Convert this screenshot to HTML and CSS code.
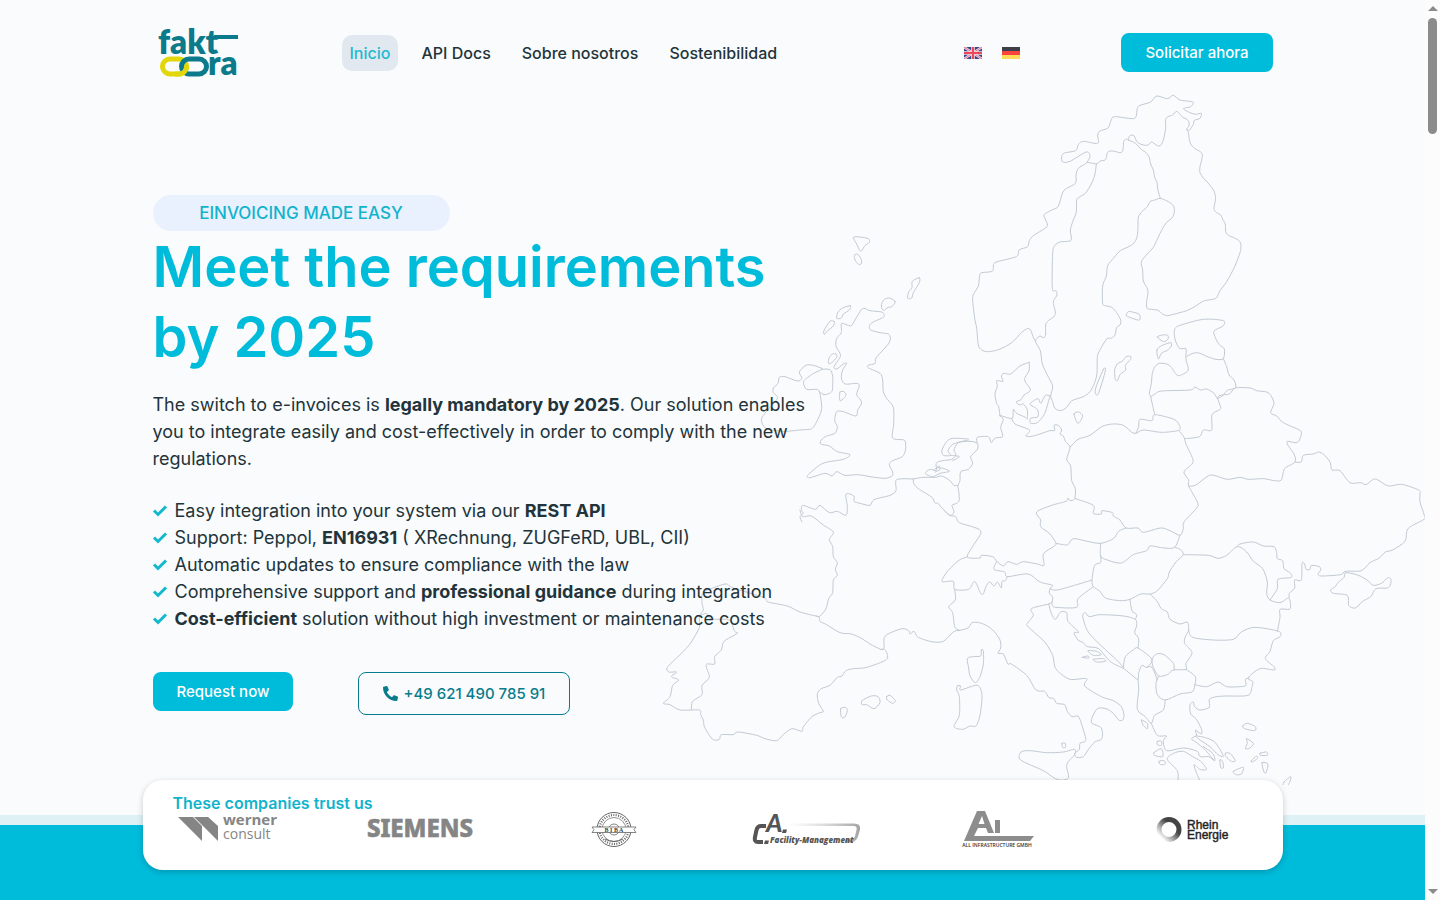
FILE: index.html
```html
<!DOCTYPE html>
<html lang="es">
<head>
<meta charset="utf-8">
<meta name="viewport" content="width=device-width, initial-scale=1">
<title>faktoora – E-Invoicing</title>
<link rel="stylesheet" href="styles.css">
<script src="map.js" defer></script>
</head>
<body>
<div class="page">
  <section class="hero">
    <svg class="map" viewBox="650 90 775 695" aria-hidden="true">
      <!-- Scandinavia, Finland, Baltics -->
      <g transform="translate(940 90) scale(.33333)">
        <path d="M469 222 442 217 M469 222 475 218 483 212 494 211 499 203 502 188 510 183 525 184 538 188 547 185 550 170 551 155 558 147 566 151 580 156 592 165 604 178 620 190 628 203 632 222 640 240 644 262 651 277 653 295 657 312 661 325 M566 151 567 140 574 135 583 138 587 148 594 158 606 164 620 166 628 162 634 156 642 160 652 167 662 166 670 150 674 132 677 115 677 88 684 80 698 75 709 64 718 70 728 82 740 87 747 97 747 108 740 117 745 128 748 148 752 162 765 176 781 185 787 195 784 215 780 230 780 248 791 265 807 282 822 303 827 325 824 342 822 358 830 368 842 375 850 392 856 402 857 425 865 436 882 443 898 453 903 466 900 488 884 530 860 575 840 602 829 624 812 629 791 633 764 650 740 662 700 673 680 677 665 670 655 661 635 658 621 655 620 632 624 610 621 593 610 573 608 540 604 515 622 492 640 472 653 445 668 415 680 397 697 383 703 365 700 347 685 335 661 325 645 330 630 335 622 350 606 365 595 381 594 410 592 437 585 455 570 468 541 482 522 503 503 527 499 558 488 588 488 640 496 647 515 652 530 668 542 690 540 705 530 712 525 735 515 744 500 747 480 780 472 800 471 850 463 880 450 905 430 920 396 932 380 952 362 962 345 955 338 935 332 918 338 888 322 855 307 822 301 782 287 757 288 748 300 738 312 744 317 732 317 705 325 692 342 680 346 666 340 640 343 628 351 615 348 602 337 595 338 490 345 466 360 456 393 451 391 420 400 390 409 365 410 330 420 320 437 309 456 278 465 252 469 222"/>
        <path d="M740 117 748 121 760 103 763 91 780 85 784 70 768 73 750 68 730 56 752 50 758 36 720 30 700 16 682 26 650 18 632 36 600 46 592 55 588 80 576 86 523 80 513 92 504 114 480 123 473 135 473 160 430 154 415 164 407 182 373 189 365 200 368 216 390 214 436 187 448 190 449 203 438 220 415 235 408 255 406 280 372 301 360 334 353 352 340 358 317 370 312 378 322 402 318 413 280 437 268 452 263 470 237 480 229 500 165 518 158 543 126 548 119 556 115 588 101 612 98 630 104 684 110 714 115 765 125 780 145 785 178 778 215 758 245 727 262 716 272 720 279 740 287 754"/>
        <path d="M559 677 565 665 577 666 598 673 599 690 580 686ZM652 741 667 735 683 736 684 747 671 755ZM651 780 665 767 692 758 694 768 682 781 665 789 655 807ZM571 799 572 808 556 826 557 840 540 854 533 871 526 868 524 840 532 822 549 812 558 800ZM491 837 496 843 475 911 466 909 469 888Z"/>
        <path d="M737 800 738 776 720 776 708 757 703 735 705 716 720 706 790 688 850 692 849 708 822 723 827 745 838 764 853 777 850 806 828 808 805 801 770 788 738 803 745 840 718 857 706 850 694 832 680 822 658 820 645 830 637 850 634 880 628 910 633 920M850 806 860 830 867 855 882 870 887 893 862 901 850 915 833 925 822 910 800 897 782 900 764 891 750 900 665 903 645 912 633 920"/>
        <path d="M268 817 267 843 255 862 256 876 270 895 268 905 252 915 243 929 228 936 240 945 250 942 262 960 262 984M268 817 240 828 212 852 192 850 184 858 189 874 170 872 172 888 165 912 170 940 176 950 180 976"/>
      </g>
      <!-- British Isles, Faroe, Low Countries -->
      <g transform="translate(750 220) scale(.33333)">
        <path d="M310 52 330 51 355 56 358 67 345 77 332 94 320 72ZM315 104 325 104 335 122 331 134 320 128 313 113ZM508 173 508 188 490 218 485 234 473 235 476 216 486 203 487 184ZM436 245 418 234 401 240 394 258 401 271 414 262 425 260ZM301 257 298 270 280 282 274 294 260 295 264 276 278 264ZM253 305 250 318 233 332 223 343 222 332 240 304ZM258 402 260 412 245 428 235 430 238 412 248 402ZM270 516 282 515 288 525 282 534 270 542Z"/>
        <path d="M343 265 360 272 395 276 402 284 400 292 366 308 358 320 362 330 390 338 415 342 421 354 415 372 378 414 376 430 354 436 356 444 390 460 398 480 400 516 412 538 430 562 431 612 428 654 462 660 467 672 466 692 457 710 428 722 418 734 428 756 426 768 405 775 360 770 325 764 285 766 260 755 246 768 225 760 180 773 173 766 208 736 232 726 280 718 300 704 262 695 238 678 212 672 214 660 230 648 255 640 262 620 254 602 260 575 280 575 318 588 323 570 334 552 332 540 320 524 328 496 318 490 285 492 274 474 278 450 290 430 280 432 260 447 252 440 270 412 270 400 258 378 260 355 274 338 275 310 302 318 315 300 333 270Z"/>
        <path d="M215 445 190 436 168 436 148 456 156 475 142 483 105 470 88 472 84 490 70 504 70 518 82 535 45 580 34 600 48 625 100 634 150 630 178 628 190 622 205 595 215 565 210 522 202 508 170 508 161 484 188 462 212 450 215 445ZM215 448 240 449 248 470 247 510 238 520 222 524 210 516"/>
        <path d="M490 777 440 779 438 812 420 826 372 839 360 856 330 850 312 844 312 828 288 822 292 860 288 886 262 874 238 878 210 856 196 868 158 856 155 872 160 880 150 890 156 906M490 777 520 772 556 772 575 768 600 782 612 797 623 798 628 838 620 850 606 856 612 876 600 886 574 862 564 850 554 848 546 832 508 808 492 792 490 777M623 798 630 782 632 755 655 748 668 730 662 710 682 688 682 670 660 664 625 668 612 690 618 705 605 718 578 722 560 728 560 742 580 745 598 754 570 760 548 770 526 760 540 748 558 752 560 742M655 657 608 655 590 665 576 690 580 706 602 706 594 692 610 672 655 660M602 706 628 710 608 722M552 750 566 738 570 748 556 756M682 670 682 652 715 650 724 668 735 654 758 650 752 622 760 598 748 587"/>
      </g>
      <!-- Central Europe -->
      <g transform="translate(920 380) scale(.33333)">
        <path d="M240 106 276 115 280 88 290 100 316 112 322 118M276 115 285 132 328 150 318 168 340 168 390 152 404 152 402 136 415 136 425 150 420 162 430 168 436 184 450 202 440 238 452 258 455 302 466 326 464 356 450 362 444 354 438 364 395 376 350 396 362 420 362 440 390 462 408 490 400 500 370 522 372 556 352 552 310 545 290 553 264 545 250 558 230 544 218 530 184 526 180 534 142 531 160 496 182 452 118 428 108 410 88 406 72 390"/>
        <path d="M390 48 378 90 370 108 352 128 332 130 332 115 354 110 352 88 330 72 354 56 362 70 376 46 390 48M462 102 476 96 488 108 474 130Z"/>
        <path d="M450 202 474 178 510 166 545 140 578 132 610 136 642 160 670 150 725 157 776 151 778 136 762 118 704 104 696 122 660 118 656 140 648 160M704 104 692 50M776 151 792 172 798 192 818 236 816 252 792 276 806 300 806 318 832 366 830 384 792 426 790 446 780 466 750 452 722 444 670 457 654 444 618 444 600 420 580 408 578 398 546 392 544 402 520 400 520 376 466 356M618 444 596 454 580 476 542 490 502 484 460 476 444 494 430 494 408 490M780 466 764 502 732 504 690 498 680 512 640 524 604 549 562 540 542 528 542 490M764 502 780 508 790 524 768 546 748 576 742 596 712 632 690 642 662 642 630 658 600 662 556 654 540 634 520 620 516 600 524 556 542 548 542 528M516 600 470 614 412 630 390 626 398 616 360 606 324 582 262 590 254 576 222 568 230 544M262 590 256 602 246 604 244 624 232 606 222 618 210 606 202 612 194 630 190 642 182 640 164 604 146 628 104 628 100 604 66 604 84 572 118 540 142 531M390 626 388 640 398 652 396 674 408 682 470 682 474 656 520 620M104 628 106 660 86 680 98 698 104 740 116 750"/>
      </g>
      <!-- Belarus, Ukraine, Romania, Moldova -->
      <g transform="translate(1140 380) scale(.33333)">
        <path d="M232 54 242 82 238 90 216 104 215 150 190 150 178 170 134 176M232 54 240 46 268 42 286 24 330 24 350 32 380 36 392 46 402 70 392 98 410 108 430 128 478 150 484 162 476 184 465 188 442 184 444 196 462 222 465 246 434 266 424 300 404 302 370 296 325 298 300 292 262 298 222 286 204 288 166 316 146 318M465 246 484 246 490 226 520 222 536 216 552 224 570 246 576 270 600 272 630 308 662 308 678 314 700 298 714 300 745 318 785 313 836 330 840 342 840 366 853 406 852 418 804 446 795 484 758 510 736 516 718 534 690 548 664 572 616 574 602 584 544 588 534 582 542 570 538 560 514 556 510 568 498 568 494 552 486 550 484 600 464 600 464 624 448 640 448 654 M616 578 612 592 592 610 586 620 572 630 580 640 622 646 626 676 646 684 668 664 692 650 708 626 742 624 752 612 752 596 742 594 724 610 700 616 684 602 660 588 642 582Z"/>
        <path d="M131 524 205 526 234 535 260 526 292 500 320 516 340 544 368 566 382 606 380 640 390 660 420 668 440 656 448 656 452 674 448 688 420 688 420 712 412 754M292 500 300 492 340 486 370 498 402 500 410 518 412 536 428 542 432 566 450 578 454 592 414 598 412 626 390 660"/>
      </g>
      <!-- France and Iberia -->
      <g transform="translate(650 560) scale(.33333)">
        <path d="M450 -150 458 -130 484 -132 520 -105 550 -84 538 -62 548 -40 550 -10 562 8 556 28 562 46 550 60 548 98 536 116 528 146 510 168 498 168 450 156 412 138 354 126 340 112 250 84 230 72 205 78 160 98 156 128 160 150 148 168 148 202 124 246 106 268 84 290 52 322 56 336 80 336 64 350 86 360 68 376 60 410 40 430 60 434 90 450 148 450 152 464 160 480 164 502 188 538 208 538 214 524 250 524 264 516 320 526 345 536 380 542 400 524 426 506 456 514 460 500 486 470 510 458 520 454 506 430 502 402 514 386 540 376 562 352 576 348 588 332 610 326 650 322 710 298 706 270 692 268 660 252 636 236 604 222 570 218 530 194 510 184 508 172 498 168M692 268 702 264 702 236 714 222 756 206 776 212 780 222 792 214 802 230 820 238 850 246 880 244 910 216 926 210M148 168 170 160 180 176 200 178 238 180 254 214 262 220 222 244 214 270 194 290 194 312 168 314 178 352 156 376 156 404 128 424 124 448"/>
        <path d="M572 446 586 442 592 452 584 472 574 470ZM636 422 664 408 684 410 690 428 672 446 650 434 636 434ZM710 410 720 406 736 422 728 430 712 420Z"/>
      </g>
      <!-- Italy and the Balkans -->
      <g transform="translate(940 580) scale(.33333)">
        <path d="M55 152 84 144 96 128 118 128 142 138 162 154 180 180 182 204 174 220 190 222 204 252 214 252 260 286 288 330 314 334 326 352 342 356 350 370 374 374 382 394 396 410 414 408 424 430 436 470 436 484 420 490 418 508 404 520 410 532 430 530 444 510 464 486 486 476 484 444 456 430 456 414 472 386 498 386 520 400 536 420 548 420 552 406 544 380 520 362 484 350 434 318 440 296 390 298 356 276 344 258 338 226 316 188 284 158 262 138 262 130 280 106 274 86 326 72 336 66 M326 72 334 100 346 118 362 96 380 98 384 124 416 156 402 158 414 180 430 188 442 200 476 206 510 244 550 264 530 240 506 218 460 174 440 148 428 108 436 98 448 110 480 104 550 108 586 118 590 136 584 158 596 176 594 204 M550 264 556 230 580 210 594 204 636 238 620 262 606 256 596 278 594 298 574 284 550 264"/>
        <path d="M243 516 270 512 320 518 370 516 404 508 404 524 384 546 380 562 386 592 370 600 346 596 310 572 242 540ZM366 490 376 490 376 502 368 502ZM124 210 130 212 130 252 120 290 106 308 90 288 86 264 82 236 98 230 122 228ZM52 318 62 318 62 330 112 316 126 346 120 406 108 438 90 438 68 448 42 440 58 406 58 350 50 330ZM444 212 470 214 484 224 460 226ZM426 232 444 228 446 234ZM460 238 490 236 496 244 470 246Z"/>
        <path d="M570 58 576 92 590 104 586 118M630 42 650 62 664 86 682 96 690 118 720 132 742 126 746 150 736 170 734 190 756 218 738 250 738 268 700 270 682 284 656 288 640 262 636 238 650 222 672 224 700 250 702 270M738 268 766 290 764 318 756 336 720 342 676 360 652 344 648 310 656 288M620 262 636 262 652 300M594 298 596 330 592 388 616 410 634 430 644 406 670 390 676 360M746 150 758 172 820 180 880 178 904 156 944 142 1016 154 1020 170 1000 182 990 214 976 236 1002 260 1002 270 960 266 924 294 938 304 936 320 924 346 860 348 830 350 808 358 808 382 780 390 764 380 760 366 750 374 752 402 768 416 784 446 784 462 766 450 770 466 754 476 770 488 794 508 824 542 818 520 790 500 M764 314 800 320 834 306 860 320 900 320 918 316 916 298 928 294M634 430 652 466 680 468 670 482 680 512 730 504 772 514 780 530 806 530 822 542M768 468 800 474 826 488 850 528 834 524 810 500 780 480ZM714 602 712 572 682 538 700 520 730 514 758 530 782 544 800 568 780 568 762 554 770 580 780 602"/>
        <path d="M604 420 622 430 622 446 610 436ZM652 484 664 484 664 496 652 494ZM642 518 664 506 668 530 644 526ZM656 544 672 542 676 552 662 554ZM856 520 870 520 886 542 874 544 858 530ZM840 540 848 544 850 564 842 562ZM908 438 922 430 946 440 944 452 914 446ZM920 476 940 490 930 504 916 506 922 490ZM960 520 980 516 982 526 962 526ZM934 542 950 528 952 536 936 546ZM966 548 984 552 978 578 972 576ZM880 574 910 562 904 582 888 584ZM1032 606 1052 590 1050 604 1036 630 1028 622Z"/>
      </g>
    </svg>

    <header class="container topbar">
      <a class="brand" href="#" aria-label="faktoora">
        <svg class="brand-logo" viewBox="0 0 84 52" aria-hidden="true">
          <g class="brand-word"><text x="1" y="27">fakt</text><text x="51" y="48">ra</text></g>
          <path d="M57 10H81" stroke="#0b7a8a" stroke-width="4" fill="none"/>
          <g fill="none" stroke-width="5">
            <rect x="5.500" y="32" width="24" height="15" rx="7.500" stroke="#e2d70b"/>
            <rect x="24.500" y="32" width="25" height="15" rx="7.500" stroke="#0b7a8a"/>
            <path d="M29.500 39a7.500 7.500 0 0 1-7.500 8h-4" stroke="#e2d70b"/>
          </g>
        </svg>
      </a>
      <nav class="menu" aria-label="Principal">
        <a class="menu-link is-active" href="#">Inicio</a>
        <a class="menu-link" href="#">API Docs</a>
        <a class="menu-link" href="#">Sobre nosotros</a>
        <a class="menu-link" href="#">Sostenibilidad</a>
      </nav>
      <div class="languages">
        <a class="language" href="#" aria-label="English">
          <svg class="flag" viewBox="0 0 18 12"><path fill="#35478c" d="M0 0h18v12H0z"/><path d="M0 0l18 12M18 0L0 12" stroke="#e9dbe6" stroke-width="2.400"/><path d="M0 0l18 12M18 0L0 12" stroke="#f0566a" stroke-width=".8"/><path d="M9 0v12M0 6h18" stroke="#f3dbe2" stroke-width="3.600"/><path d="M9 0v12M0 6h18" stroke="#f0465a" stroke-width="2"/></svg>
        </a>
        <a class="language" href="#" aria-label="Deutsch">
          <svg class="flag" viewBox="0 0 18 12"><path fill="#3f3f4a" d="M0 0h18v4H0z"/><path fill="#f9443b" d="M0 4h18v4H0z"/><path fill="#ffda58" d="M0 8h18v4H0z"/></svg>
        </a>
      </div>
      <a class="button button-solid" href="#">Solicitar ahora</a>
    </header>

    <main class="container intro">
      <p class="badge">EINVOICING MADE EASY</p>
      <h1 class="title">Meet the requirements<br>by 2025</h1>
      <p class="lead">The switch to e-invoices is <strong>legally mandatory by 2025</strong>. Our solution enables you to integrate easily and cost-effectively in order to comply with the new regulations.</p>
      <ul class="benefits">
        <li class="benefit"><svg class="check" viewBox="0 0 14 12"><path d="M1 5.500L5 9.500 13 1.500"/></svg><span>Easy integration into your system via our <strong>REST API</strong></span></li>
        <li class="benefit"><svg class="check" viewBox="0 0 14 12"><path d="M1 5.500L5 9.500 13 1.500"/></svg><span>Support: Peppol, <strong>EN16931</strong> ( XRechnung, ZUGFeRD, UBL, CII)</span></li>
        <li class="benefit"><svg class="check" viewBox="0 0 14 12"><path d="M1 5.500L5 9.500 13 1.500"/></svg><span>Automatic updates to ensure compliance with the law</span></li>
        <li class="benefit"><svg class="check" viewBox="0 0 14 12"><path d="M1 5.500L5 9.500 13 1.500"/></svg><span>Comprehensive support and <strong>professional guidance</strong> during integration</span></li>
        <li class="benefit"><svg class="check" viewBox="0 0 14 12"><path d="M1 5.500L5 9.500 13 1.500"/></svg><span><strong>Cost-efficient</strong> solution without high investment or maintenance costs</span></li>
      </ul>
      <div class="actions">
        <a class="button button-solid" href="#">Request now</a>
        <a class="button button-outline" href="tel:+4962149078591">
          <svg class="phone" viewBox="0 0 512 512" aria-hidden="true"><path d="M493.400 24.600l-104-24c-11.300-2.600-22.900 3.300-27.500 13.900l-48 112c-4.200 9.800-1.400 21.300 6.900 28l60.600 49.600c-36 76.700-98.900 140.500-177.200 177.200l-49.600-60.600c-6.800-8.300-18.200-11.100-28-6.900l-112 48C3.900 366.500-2 378.100.6 389.400l24 104C27.100 504.200 36.700 512 48 512c256.100 0 464-207.500 464-464 0-11.200-7.700-20.900-18.600-23.400z" transform="matrix(-1 0 0 1 512 0)"/></svg>
          +49 621 490 785 91
        </a>
      </div>
    </main>
  </section>

  <section class="trust">
    <div class="trust-card">
      <h2 class="trust-title">These companies trust us</h2>
      <div class="logos">
        <svg class="logo" viewBox="0 0 108 36" role="img" aria-label="werner consult">
          <path fill="#858585" d="M5 6h15l9 9v15zM21 6h14l10 9v15z"/>
          <g fill="#858585" font-family="Open Sans, sans-serif" font-size="15"><text x="50" y="14" font-weight="700">werner</text><text x="50" y="28" font-size="14">consult</text></g>
        </svg>
        <svg class="logo" viewBox="0 0 108 36" role="img" aria-label="SIEMENS"><text x="54" y="26" text-anchor="middle" fill="#858585" stroke="#858585" stroke-width=".6" font-family="Noto Sans, sans-serif" font-size="24" font-weight="800">SIEMENS</text></svg>
        <svg class="logo" viewBox="0 0 108 36" role="img" aria-label="BIBA">
          <g fill="none" stroke="#666"><circle cx="55" cy="18.500" r="17" stroke-width="1"/><circle cx="55" cy="18.500" r="12" stroke-width=".7"/><circle cx="55" cy="18.500" r="14.500" stroke-width="2.200" stroke-dasharray="1 1.400"/><circle cx="55" cy="18.500" r="5.500" stroke-width=".8"/><path d="M46 28q9 5 18 0" stroke-width="1"/></g>
          <path d="M33 16h44l-2 2.700 2 2.800H33l2-2.800z" fill="#fff" stroke="#666" stroke-width=".8"/>
          <text x="55" y="20.800" text-anchor="middle" fill="#444" font-family="Liberation Serif, serif" font-size="6" font-weight="700">B I B A</text>
        </svg>
        <svg class="logo" viewBox="0 0 108 36" role="img" aria-label="C.A. Facility-Management">
          <defs><linearGradient id="fade"><stop offset="0" stop-color="#ccc" stop-opacity="0"/><stop offset="1" stop-color="#a4a4a4"/></linearGradient></defs>
          <path d="M36 12.500h66q7 0 6 6l-2 7q-2 6-9 6h-4v-2.500h4q5 0 6-4l1.500-6q1-4-3-4H36z" fill="url(#fade)"/>
          <path d="M14 15H9Q5.500 15 4.500 19L3 26Q2 31 6 31h5" fill="none" stroke="#555" stroke-width="4"/>
          <path d="M13 29.500h4l-1 3.500h-4zM31 18.500h4l-1 3.500h-4z" fill="#555"/>
          <text x="14" y="21" fill="#555" font-family="Lato, sans-serif" font-size="25" font-weight="900" font-style="italic">A</text>
          <text x="18" y="32" fill="#555" font-family="Open Sans, sans-serif" font-size="8" font-weight="800" font-style="italic">Facility-Management</text>
        </svg>
        <svg class="logo" viewBox="0 0 108 36" role="img" aria-label="AI All Infrastructure GmbH">
          <path fill="#8d8d8d" fill-rule="evenodd" d="M32 0h8l9 22h-6l-2-5h-8l-4 8h60l-4 5H19zM37 5l-3.500 8h6zM50 9h5v13h-5z"/>
          <text x="52" y="36" text-anchor="middle" fill="#333" font-family="Open Sans, sans-serif" font-size="5" font-weight="600">ALL INFRASTRUCTURE GMBH</text>
        </svg>
        <svg class="logo" viewBox="0 0 108 36" role="img" aria-label="Rhein Energie">
          <defs><linearGradient id="ring" x1="0" y1="1" x2="1" y2="0"><stop offset=".1" stop-color="#fff"/><stop offset=".65" stop-color="#444"/></linearGradient></defs>
          <circle cx="31" cy="18.500" r="10" fill="none" stroke="url(#ring)" stroke-width="5"/>
          <g fill="#222" stroke="#222" stroke-width=".4" font-family="Liberation Sans, sans-serif" font-size="12"><text x="49" y="18">Rhein</text><text x="49" y="28">Energie</text></g>
        </svg>
      </div>
    </div>
  </section>
</div>
<div class="scrollbar" aria-hidden="true">
  <span class="arrow arrow-up"></span>
  <span class="thumb"></span>
  <span class="arrow arrow-down"></span>
</div>
</body>
</html>
```
FILE: map.js
```js
// Turns the straight border segments of the map into smooth curves.
function smooth(points, closed) {
  const n = points.length;
  const at = i => closed ? points[(i + n) % n] : points[Math.max(0, Math.min(n - 1, i))];
  const k = 7;
  let d = `M${points[0][0]} ${points[0][1]}`;
  const last = closed ? n : n - 1;
  for (let i = 0; i < last; i++) {
    const [a, b, c, e] = [at(i - 1), at(i), at(i + 1), at(i + 2)];
    d += `C${b[0] + (c[0] - a[0]) / k} ${b[1] + (c[1] - a[1]) / k} ` +
         `${c[0] - (e[0] - b[0]) / k} ${c[1] - (e[1] - b[1]) / k} ${c[0]} ${c[1]}`;
  }
  return closed ? d + "Z" : d;
}

document.querySelectorAll(".map path").forEach(path => {
  const lines = path.getAttribute("d").split("M").filter(s => s.trim());
  path.setAttribute("d", lines.map(line => {
    const nums = line.match(/-?\d+/g).map(Number);
    const points = [];
    for (let i = 0; i < nums.length; i += 2) points.push([nums[i], nums[i + 1]]);
    return smooth(points, line.includes("Z"));
  }).join(""));
});
```
FILE: styles.css
```css
* { box-sizing: border-box; }

body {
  margin: 0;
  display: flex;
  height: 100vh;
  overflow: hidden;
  font-family: Inter, "Liberation Sans", sans-serif;
  color: #22343a;
  background: #fff;
}

a { color: inherit; text-decoration: none; }

.page {
  flex: 1;
  min-width: 0;
  display: flex;
  flex-direction: column;
}

.container {
  width: 100%;
  max-width: 1140px;
  margin: 0 auto;
  padding: 0 10px;
}

/* Hero */
.hero {
  position: relative;
  padding-bottom: 100px;
  background: #f9fbfd;
}

.map {
  position: absolute;
  top: 90px;
  right: 0;
  width: 775px;
  height: 695px;
  fill: none;
  stroke: #c1c9d2;
  stroke-width: 3;
  stroke-linejoin: round;
  stroke-linecap: round;
}

.topbar {
  position: relative;
  display: flex;
  align-items: center;
  height: 105px;
}

.brand { flex: 0 0 189px; padding-left: 4px; }
.brand-logo { display: block; width: 84px; height: 52px; overflow: visible; }
.brand-word {
  font-family: Lato, sans-serif;
  font-size: 33px;
  font-weight: 800;
  fill: #0b7a8a;
}

.menu { display: flex; gap: 15px; }
.menu-link {
  padding: 8px;
  border-radius: 10px;
  font-size: 16px;
  line-height: 20px;
  font-weight: 500;
  white-space: nowrap;
}
.menu-link.is-active { background: #e2e8f0; color: #1fb9d0; }

.languages { display: flex; gap: 20px; margin-left: auto; }
.language { display: block; }
.flag { display: block; width: 18px; height: 12px; }
.topbar .button { margin-left: 101px; }

.button {
  display: inline-flex;
  align-items: center;
  gap: 5px;
  border-radius: 8px;
  font-size: 15px;
  line-height: 15px;
  font-weight: 500;
  white-space: nowrap;
}
.button-solid { padding: 12px 24px; background: #00bcdb; color: #fff; }
.button-outline { padding: 13px 24px; border: 1px solid #087c8b; color: #087c8b; }
.phone { width: 15px; height: 15px; fill: currentColor; }

.intro { position: relative; padding-top: 90px; }

.badge {
  width: 297px;
  margin: 0;
  border-radius: 18px;
  background: #eaf1fe;
  color: #12b3cc;
  font-size: 17px;
  line-height: 36px;
  font-weight: 500;
  text-align: center;
}

.title {
  margin: 1px 0 19px;
  color: #00bcdb;
  font-size: 56px;
  line-height: 70px;
  font-weight: 600;
}

.lead {
  max-width: 660px;
  margin: 0 0 25px;
  font-size: 18px;
  line-height: 27px;
}

.benefits {
  margin: 0 0 40px;
  padding: 0;
  list-style: none;
  font-size: 18px;
  line-height: 27px;
}
.benefit { display: flex; align-items: center; gap: 8px; }
.check {
  width: 14px;
  height: 12px;
  fill: none;
  stroke: #12b9cd;
  stroke-width: 3;
  overflow: visible;
}

.actions { display: flex; align-items: flex-start; gap: 65px; }

/* Customers */
.trust {
  position: relative;
  flex: 1;
  border-top: 10px solid #def2f6;
  background: #00bcdb;
}

.trust-card {
  position: relative;
  max-width: 1140px;
  margin: -45px auto 0;
  padding: 15px 36px 23px 30px;
  border-radius: 20px;
  background: #fff;
  box-shadow: 0 2px 6px rgba(0, 0, 0, .2);
}

.trust-title {
  margin: 0;
  color: #12b3cc;
  font-size: 16px;
  line-height: 16px;
  font-weight: 600;
}

.logos { display: flex; justify-content: space-between; }
.logo { width: 108px; height: 36px; overflow: visible; }

/* Scroll track */
.scrollbar {
  flex: 0 0 15px;
  display: flex;
  flex-direction: column;
  align-items: center;
  padding: 6px 0;
  background: #fcfcfc;
}
.arrow { border: 5px solid transparent; }
.arrow-up { border-top-width: 0; border-bottom-color: #8b8b8b; }
.arrow-down { margin-top: auto; border-bottom-width: 0; border-top-color: #8b8b8b; }
.thumb {
  width: 9px;
  height: 116px;
  margin-top: 7px;
  border-radius: 5px;
  background: #8b8b8b;
}
```
